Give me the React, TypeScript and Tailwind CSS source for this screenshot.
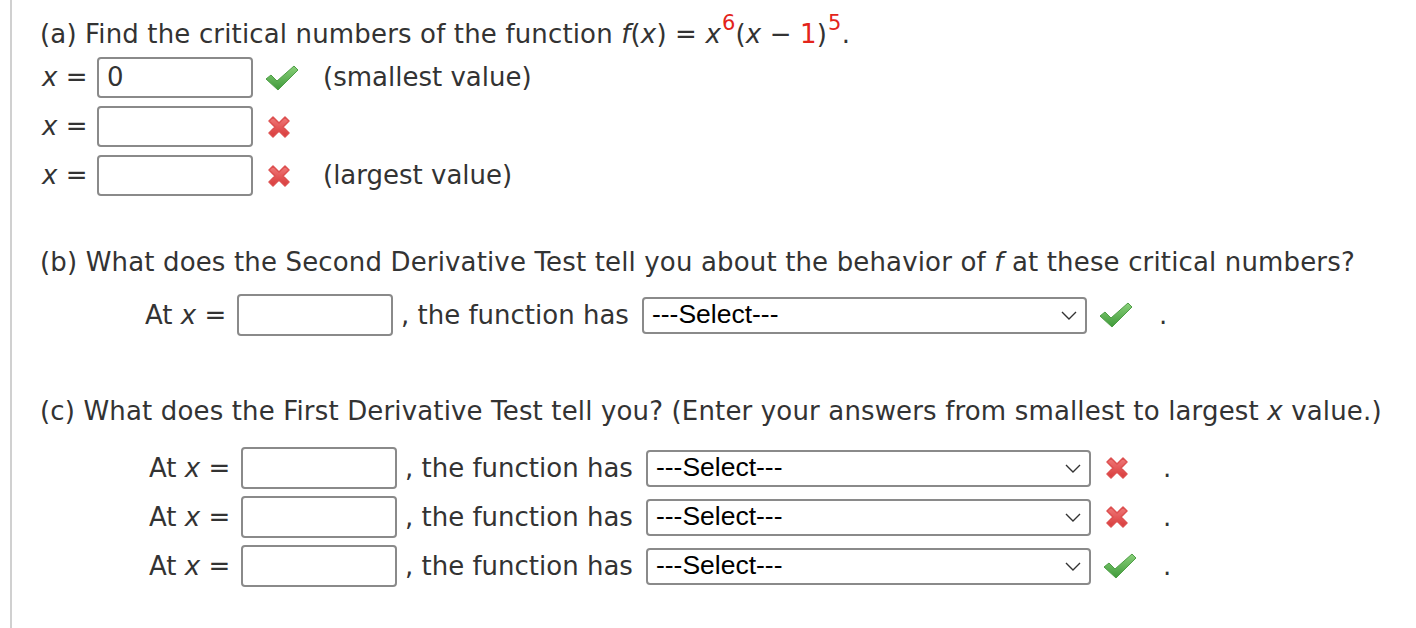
import React from 'react';

const font = { fontFamily: '"DejaVu Sans", Verdana, sans-serif' };

function Check() {
  return (
    <svg width="34" height="26" viewBox="0 0 34 26" className="shrink-0">
      <defs>
        <linearGradient id="gchk" x1="0" y1="0" x2="0" y2="1">
          <stop offset="0" stopColor="#8ad07a" />
          <stop offset="1" stopColor="#3f9a3a" />
        </linearGradient>
      </defs>
      <path d="M1 14 L6 10 L12 16 L29 1 L33 5 L13 25 Z" fill="url(#gchk)" stroke="#4e9e46" strokeWidth="1" strokeLinejoin="round" />
    </svg>
  );
}

function Cross() {
  return (
    <svg width="28" height="28" viewBox="0 0 28 28" className="shrink-0">
      <defs>
        <linearGradient id="gx" x1="0" y1="0" x2="0" y2="1">
          <stop offset="0" stopColor="#f07a7a" />
          <stop offset="1" stopColor="#d83a3a" />
        </linearGradient>
      </defs>
      <path d="M4 8 L8 4 L14 10 L20 4 L24 8 L18 14 L24 20 L20 24 L14 18 L8 24 L4 20 L10 14 Z" fill="url(#gx)" stroke="#dd5050" strokeWidth="1.5" strokeLinejoin="round" />
    </svg>
  );
}

function Box({ value = '', h = 'h-[42px]' }: { value?: string; h?: string }) {
  return (
    <div className={`w-[156px] ${h} shrink-0 border-2 border-[#8a8a8a] rounded-[4px] bg-white flex items-center pl-[8px] text-[26px] text-[#333]`}>
      {value}
    </div>
  );
}

function Select() {
  return (
    <div className="relative w-[445px] h-[37px] shrink-0 border-2 border-[#8a8a8a] rounded-[4px] bg-white flex items-center pl-[8px]">
      <span className="text-[26.5px] text-black" style={{ fontFamily: '"Liberation Sans", Arial, sans-serif' }}>---Select---</span>
      <svg className="absolute right-[8px] top-[12px]" width="16" height="10" viewBox="0 0 16 10">
        <path d="M1 1 L8 8 L15 1" fill="none" stroke="#333" strokeWidth="1.4" />
      </svg>
    </div>
  );
}

function RowA({ value, icon, note }: { value?: string; icon: 'check' | 'cross'; note?: string }) {
  return (
    <div className="flex items-center h-[41px]">
      <div className="w-[57px] pl-[2px] whitespace-pre"><i>x</i> =</div>
      <Box value={value} h="h-[41px]" />
      <div className="w-[70px] flex pl-[12px]">{icon === 'check' ? <Check /> : <Cross />}</div>
      {note && <span>{note}</span>}
    </div>
  );
}

function RowFn({ icon, indent }: { icon: 'check' | 'cross'; indent: string }) {
  return (
    <div className={`flex items-center h-[42px] ${indent}`}>
      <span className="w-[92px] whitespace-pre">At <i>x</i> =</span>
      <Box />
      <span className="whitespace-pre ml-[8px] mr-[13px]">, the function has</span>
      <Select />
      <div className="w-[72px] flex pl-[12px]">{icon === 'check' ? <Check /> : <Cross />}</div>
      <span>.</span>
    </div>
  );
}

export default function App() {
  return (
    <div className="w-[1416px] h-[628px] bg-white flex overflow-hidden text-[26px] text-[#333]" style={font}>
      <div className="ml-[10px] w-[2px] h-full bg-[#d0d0d0]" />
      <div className="pl-[28px] flex flex-col">
        <div className="mt-[16px] h-[36px] flex items-center whitespace-pre tracking-[0.15px]">
          (a) Find the critical numbers of the function <i>f</i>(<i>x</i>) = <i>x</i>
          <sup className="text-[#e3241b] text-[21px] -top-[11px] ml-[1px]">6</sup>(<i>x</i> − <span className="text-[#e3241b]">1</span>)
          <sup className="text-[#e3241b] text-[21px] -top-[11px] ml-[1px]">5</sup>.
        </div>
        <div className="mt-[5px] flex flex-col gap-[8px]">
          <RowA value="0" icon="check" note="(smallest value)" />
          <RowA icon="cross" />
          <RowA icon="cross" note="(largest value)" />
        </div>
        <div className="mt-[48px] h-[36px] flex items-center whitespace-pre tracking-[0.15px]">
          (b) What does the Second Derivative Test tell you about the behavior of <i>f</i> at these critical numbers?
        </div>
        <div className="mt-[14px]">
          <RowFn icon="check" indent="pl-[105px]" />
        </div>
        <div className="mt-[57px] h-[36px] flex items-center whitespace-pre tracking-[0.15px]">
          (c) What does the First Derivative Test tell you? (Enter your answers from smallest to largest <i>x</i> value.)
        </div>
        <div className="mt-[18px] flex flex-col gap-[7px]">
          <RowFn icon="cross" indent="pl-[109px]" />
          <RowFn icon="cross" indent="pl-[109px]" />
          <RowFn icon="check" indent="pl-[109px]" />
        </div>
      </div>
    </div>
  );
}
